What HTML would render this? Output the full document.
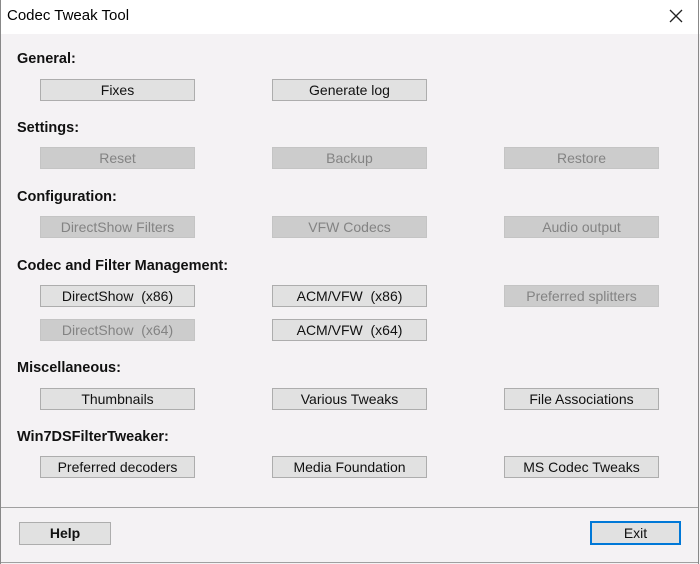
<!DOCTYPE html><html><head><style>
body{margin:0;width:700px;height:564px;overflow:hidden;background:#f4f2f4;font-family:"Liberation Sans",sans-serif;position:relative}
.t{position:absolute;left:0;top:0;width:700px;height:34px;background:#fff}
.t span{position:absolute;left:7px;top:7px;font-size:15px;color:#000}
.x{position:absolute;left:669px;top:9px}
.lb{position:absolute;left:0;top:0;width:1px;height:564px;background:#888}
.rb{position:absolute;right:1px;top:0;width:1px;height:564px;background:#888}
.h{position:absolute;left:17px;font-weight:bold;font-size:14.5px;color:#111}
.b{position:absolute;width:153px;height:20px;border:1px solid #adadad;background:#e1e1e1;font-size:14px;text-align:center;line-height:20px;color:#111}
.d{background:#cccccc;border-color:#c4c4c4;color:#838383}
.sep{position:absolute;left:1px;width:697px;height:1px;background:#a0a0a0}
</style></head><body>
<div class="t"><span>Codec Tweak Tool</span><svg class="x" width="14" height="14"><path d="M1 1L13 13M13 1L1 13" stroke="#222" stroke-width="1.3"/></svg></div>
<div class="lb"></div><div class="rb"></div>
<div class="h" style="top:51px">General:</div>
<div class="b" style="left:40px;top:79px">Fixes</div>
<div class="b" style="left:272px;top:79px">Generate log</div>
<div class="h" style="top:120px">Settings:</div>
<div class="b d" style="left:40px;top:147px">Reset</div>
<div class="b d" style="left:272px;top:147px">Backup</div>
<div class="b d" style="left:504px;top:147px">Restore</div>
<div class="h" style="top:189px">Configuration:</div>
<div class="b d" style="left:40px;top:216px">DirectShow Filters</div>
<div class="b d" style="left:272px;top:216px">VFW Codecs</div>
<div class="b d" style="left:504px;top:216px">Audio output</div>
<div class="h" style="top:258px">Codec and Filter Management:</div>
<div class="b" style="left:40px;top:285px">DirectShow&nbsp; (x86)</div>
<div class="b" style="left:272px;top:285px">ACM/VFW&nbsp; (x86)</div>
<div class="b d" style="left:504px;top:285px">Preferred splitters</div>
<div class="b d" style="left:40px;top:319px">DirectShow&nbsp; (x64)</div>
<div class="b" style="left:272px;top:319px">ACM/VFW&nbsp; (x64)</div>
<div class="h" style="top:360px">Miscellaneous:</div>
<div class="b" style="left:40px;top:388px">Thumbnails</div>
<div class="b" style="left:272px;top:388px">Various Tweaks</div>
<div class="b" style="left:504px;top:388px">File Associations</div>
<div class="h" style="top:429px">Win7DSFilterTweaker:</div>
<div class="b" style="left:40px;top:456px">Preferred decoders</div>
<div class="b" style="left:272px;top:456px">Media Foundation</div>
<div class="b" style="left:504px;top:456px">MS Codec Tweaks</div>
<div class="sep" style="top:507px"></div>
<div class="sep" style="top:562px"></div>
<div class="b" style="left:19px;top:522px;width:90px;height:21px;font-weight:bold">Help</div>
<div class="b" style="left:590px;top:521px;width:87px;height:20px;border:2px solid #0078d7">Exit</div>
</body></html>
